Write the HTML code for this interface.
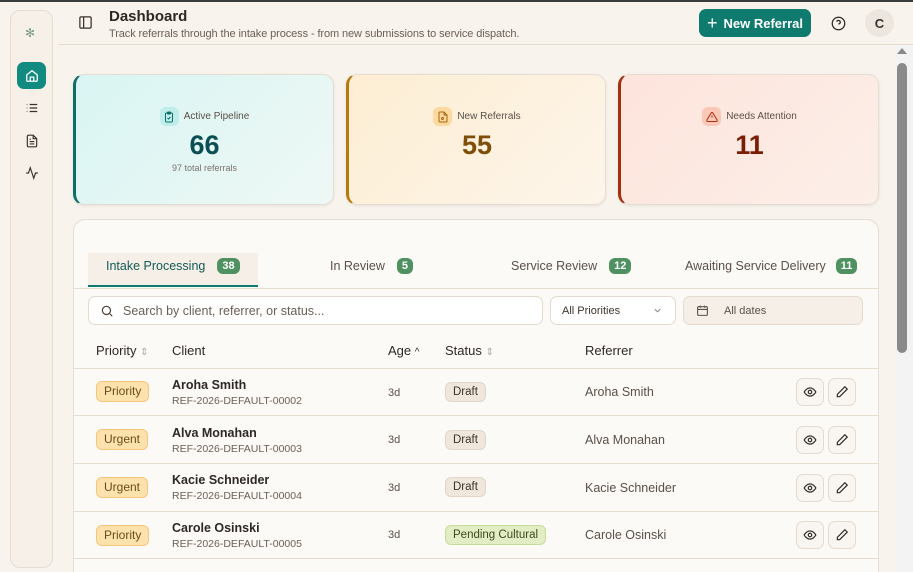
<!DOCTYPE html>
<html style="width:913px;height:572px;overflow:hidden"><head><meta charset="utf-8"><style>
*{box-sizing:border-box;margin:0;padding:0}
body{width:913px;height:572px;overflow:hidden;background:#f8f3ed;font-family:"Liberation Sans",sans-serif;color:#2b2420;position:relative}
.top{position:absolute;left:0;top:0;width:913px;height:2px;background:#3a3a3a}
.side{position:absolute;left:10px;top:10px;width:43px;height:558px;border:1px solid #e6ddd2;border-radius:10px;background:#f7f0e8}
.ico{position:absolute;left:6px;width:29px;height:27px;border-radius:7px;display:flex;align-items:center;justify-content:center}
.hdr-line{position:absolute;left:59px;top:44px;width:854px;height:1px;background:#e4dace}
.title{position:absolute;left:109px;top:8px;font-size:15px;font-weight:bold;color:#2e2824}
.sub{position:absolute;left:109px;top:28px;font-size:11px;color:#6a5f55;letter-spacing:-.1px}
.btn{position:absolute;left:699px;top:9px;width:112px;height:28px;border-radius:7px;background:#0f7a6e;color:#fff;font-size:13px;font-weight:bold;display:flex;align-items:center;justify-content:center;gap:6px}
.av{position:absolute;left:865px;top:9px;width:29px;height:28px;border-radius:50%;background:#ece6de;font-size:13px;display:flex;align-items:center;justify-content:center;font-weight:bold;color:#333}
.sb{position:absolute;left:895px;top:45px;width:18px;height:527px;background:#f3f3f3}
.thumb{position:absolute;left:897px;top:63px;width:10px;height:290px;border-radius:5px;background:#8a8a8a}
.card{position:absolute;top:74px;height:131px;border-radius:11px;border:1px solid #e6ddd2;box-shadow:0 1px 3px rgba(0,0,0,.08);text-align:center}
.card .lab{position:absolute;top:32px;left:0;right:0;display:flex;justify-content:center;align-items:center;gap:5px;font-size:10px;color:#5a5048}
.card .lab i{width:19px;height:19px;border-radius:6px;display:inline-flex;align-items:center;justify-content:center}
.card .num{position:absolute;top:55px;left:0;right:0;font-size:27px;font-weight:bold}
.card .s{position:absolute;top:88px;left:0;right:0;font-size:9px;color:#7a7068}
.panel{position:absolute;left:73px;top:219px;width:806px;height:353px;border-radius:12px 12px 0 0;border:1px solid #e6ddd2;border-bottom:none;background:#fcfaf7}
.tab{position:absolute;top:258px;font-size:12.5px;color:#5a5048;display:flex;align-items:center;gap:12px}
.bdg{background:#4f9160;color:#fff;font-size:11px;font-weight:bold;border-radius:6px;padding:2px 5px}
.in{position:absolute;height:29px;border:1px solid #e4dace;border-radius:7px;background:#fff;font-size:12px;display:flex;align-items:center}
.th{position:absolute;top:343px;font-size:13px;color:#2e2824}
.hl{position:absolute;left:74px;width:804px;height:1px;background:#e6ddd2}
.pr{position:absolute;left:96px;height:21px;border:1px solid #f3c67a;background:#fde2ae;border-radius:6px;font-size:12px;color:#6a4a1a;padding:0 7px;line-height:19px}
.nm{position:absolute;left:172px;font-size:12.5px;font-weight:bold;color:#2e2824}
.rf{position:absolute;left:172px;font-size:10.5px;color:#6a5f55}
.ag{position:absolute;left:388px;font-size:11px;color:#5a5048}
.st{position:absolute;left:445px;height:20px;border:1px solid #e0d6ca;background:#efe6dc;border-radius:6px;font-size:11.5px;padding:0 7px;line-height:18px;color:#3e342c}
.re{position:absolute;left:585px;font-size:12.5px;color:#5a5048}
.ab{position:absolute;width:28px;height:28px;border:1px solid #e4dace;border-radius:7px;background:#f9f5f0;display:flex;align-items:center;justify-content:center}
</style></head><body>
<div class="top"></div>
<div class="side">
 <div style="position:absolute;left:14px;top:15px;font-size:12px;color:#7a9a8a">✻</div>
 <div class="ico" style="top:51px;background:#118a80"><svg width="14" height="14" viewBox="0 0 24 24" fill="none" stroke="#fff" stroke-width="2.2"><path d="M3 10l9-7 9 7v10a1 1 0 0 1-1 1H4a1 1 0 0 1-1-1z"/><path d="M9 21v-7h6v7"/></svg></div>
 <div class="ico" style="top:83px"><svg width="14" height="14" viewBox="0 0 24 24" fill="none" stroke="#3a302a" stroke-width="2"><path d="M8 6h13M8 12h13M8 18h13M3 6h1M3 12h1M3 18h1"/></svg></div>
 <div class="ico" style="top:116px"><svg width="14" height="14" viewBox="0 0 24 24" fill="none" stroke="#3a302a" stroke-width="2"><path d="M14 2H6a2 2 0 0 0-2 2v16a2 2 0 0 0 2 2h12a2 2 0 0 0 2-2V8z"/><path d="M14 2v6h6M8 13h8M8 17h8M8 9h2"/></svg></div>
 <div class="ico" style="top:148px"><svg width="14" height="14" viewBox="0 0 24 24" fill="none" stroke="#3a302a" stroke-width="2"><path d="M22 12h-4l-3 9L9 3l-3 9H2"/></svg></div>
</div>
<svg style="position:absolute;left:78px;top:15px" width="15" height="15" viewBox="0 0 24 24" fill="none" stroke="#3a302a" stroke-width="2"><rect x="3" y="3" width="18" height="18" rx="2"/><path d="M9 3v18"/></svg>
<div class="title">Dashboard</div>
<div class="sub">Track referrals through the intake process - from new submissions to service dispatch.</div>
<div class="hdr-line"></div>
<div class="btn"><span style="font-size:18px;font-weight:normal">+</span>New Referral</div>
<svg style="position:absolute;left:831px;top:16px" width="15" height="15" viewBox="0 0 24 24" fill="none" stroke="#2e2824" stroke-width="2"><circle cx="12" cy="12" r="10"/><path d="M9.1 9a3 3 0 0 1 5.8 1c0 2-3 3-3 3M12 17h.01"/></svg>
<div class="av">C</div>

<div class="card" style="left:73px;width:261px;background:linear-gradient(135deg,#d9f5f3,#eef8f5);border-left:3px solid #0d6e68">
 <div class="lab"><i style="background:#bfeeea"><svg width="12" height="12" viewBox="0 0 24 24" fill="none" stroke="#0d6e68" stroke-width="2"><rect x="5" y="4" width="14" height="18" rx="2"/><rect x="9" y="2" width="6" height="4" rx="1"/><path d="M9 14l2 2 4-4"/></svg></i>Active Pipeline</div>
 <div class="num" style="color:#0b4f55">66</div><div class="s">97 total referrals</div></div>
<div class="card" style="left:346px;width:260px;background:linear-gradient(135deg,#fdeed3,#fdf5ea);border-left:3px solid #b9770e">
 <div class="lab"><i style="background:#fcd9a0"><svg width="12" height="12" viewBox="0 0 24 24" fill="none" stroke="#a8650a" stroke-width="2"><path d="M14 2H6a2 2 0 0 0-2 2v16a2 2 0 0 0 2 2h12a2 2 0 0 0 2-2V8z"/><path d="M14 2v6h6"/><circle cx="11" cy="15" r="2"/></svg></i>New Referrals</div>
 <div class="num" style="color:#7f4f0a">55</div></div>
<div class="card" style="left:618px;width:261px;background:linear-gradient(135deg,#fde4dc,#fcefe8);border-left:3px solid #a3300f">
 <div class="lab"><i style="background:#fbc7b6"><svg width="12" height="12" viewBox="0 0 24 24" fill="none" stroke="#a3300f" stroke-width="2"><path d="M10.3 3.9L1.8 18a2 2 0 0 0 1.7 3h17a2 2 0 0 0 1.7-3L13.7 3.9a2 2 0 0 0-3.4 0z"/><path d="M12 9v4M12 17h.01"/></svg></i>Needs Attention</div>
 <div class="num" style="color:#7a1e06">11</div></div>

<div class="panel"></div>
<div style="position:absolute;left:88px;top:253px;width:170px;height:34px;background:#f5efe7;border-bottom:2px solid #0f7a6e"></div>
<div class="hl" style="top:288px"></div>
<div class="tab" style="left:106px;color:#145a55">Intake Processing <span class="bdg">38</span></div>
<div class="tab" style="left:330px">In Review <span class="bdg">5</span></div>
<div class="tab" style="left:511px">Service Review <span class="bdg">12</span></div>
<div class="tab" style="left:685px;gap:10px">Awaiting Service Delivery <span class="bdg">11</span></div>

<div class="in" style="left:88px;top:296px;width:455px;padding-left:11px;color:#6a5f55;font-size:12.5px"><svg width="14" height="14" viewBox="0 0 24 24" fill="none" stroke="#4a4038" stroke-width="2" style="margin-right:9px"><circle cx="11" cy="11" r="7"/><path d="M21 21l-4.3-4.3"/></svg>Search by client, referrer, or status...</div>
<div class="in" style="left:550px;top:296px;width:126px;padding-left:11px;color:#3e342c;font-size:11px">All Priorities<svg style="position:absolute;right:12px" width="11" height="11" viewBox="0 0 24 24" fill="none" stroke="#8a8078" stroke-width="2"><path d="M6 9l6 6 6-6"/></svg></div>
<div class="in" style="left:683px;top:296px;width:180px;padding-left:12px;background:#f5efe7;color:#5a5048;font-size:11px"><svg width="13" height="13" viewBox="0 0 24 24" fill="none" stroke="#5a5048" stroke-width="2" style="margin-right:15px"><rect x="3" y="5" width="18" height="16" rx="2"/><path d="M3 10h18M8 3v4M16 3v4"/></svg>All dates</div>

<div class="th" style="left:96px">Priority <span style="color:#aaa;font-size:10px">⇕</span></div>
<div class="th" style="left:172px">Client</div>
<div class="th" style="left:388px">Age <span style="font-size:10px">^</span></div>
<div class="th" style="left:445px">Status <span style="color:#aaa;font-size:10px">⇕</span></div>
<div class="th" style="left:585px">Referrer</div>
<div class="hl" style="top:368px"></div>

<div class="pr" style="top:381px">Priority</div><div class="nm" style="top:378px">Aroha Smith</div><div class="rf" style="top:395px">REF-2026-DEFAULT-00002</div><div class="ag" style="top:387px">3d</div><div class="st" style="top:382px">Draft</div><div class="re" style="top:385px">Aroha Smith</div>
<div class="hl" style="top:415px"></div>
<div class="pr" style="top:429px">Urgent</div><div class="nm" style="top:426px">Alva Monahan</div><div class="rf" style="top:443px">REF-2026-DEFAULT-00003</div><div class="ag" style="top:434px">3d</div><div class="st" style="top:430px">Draft</div><div class="re" style="top:433px">Alva Monahan</div>
<div class="hl" style="top:463px"></div>
<div class="pr" style="top:477px">Urgent</div><div class="nm" style="top:473px">Kacie Schneider</div><div class="rf" style="top:490px">REF-2026-DEFAULT-00004</div><div class="ag" style="top:482px">3d</div><div class="st" style="top:477px">Draft</div><div class="re" style="top:481px">Kacie Schneider</div>
<div class="hl" style="top:511px"></div>
<div class="pr" style="top:525px">Priority</div><div class="nm" style="top:521px">Carole Osinski</div><div class="rf" style="top:538px">REF-2026-DEFAULT-00005</div><div class="ag" style="top:529px">3d</div><div class="st" style="top:525px;background:#e3edc5;border-color:#c8dc9a;color:#3e4a1c">Pending Cultural</div><div class="re" style="top:528px">Carole Osinski</div>
<div class="hl" style="top:558px"></div>

<div class="ab" style="left:796px;top:378px"><svg width="14" height="14" viewBox="0 0 24 24" fill="none" stroke="#2e2824" stroke-width="2"><path d="M2 12s4-7 10-7 10 7 10 7-4 7-10 7S2 12 2 12z"/><circle cx="12" cy="12" r="3"/></svg></div>
<div class="ab" style="left:828px;top:378px"><svg width="14" height="14" viewBox="0 0 24 24" fill="none" stroke="#2e2824" stroke-width="2"><path d="M17 3l4 4L8 20H4v-4z"/></svg></div>
<div class="ab" style="left:796px;top:426px"><svg width="14" height="14" viewBox="0 0 24 24" fill="none" stroke="#2e2824" stroke-width="2"><path d="M2 12s4-7 10-7 10 7 10 7-4 7-10 7S2 12 2 12z"/><circle cx="12" cy="12" r="3"/></svg></div>
<div class="ab" style="left:828px;top:426px"><svg width="14" height="14" viewBox="0 0 24 24" fill="none" stroke="#2e2824" stroke-width="2"><path d="M17 3l4 4L8 20H4v-4z"/></svg></div>
<div class="ab" style="left:796px;top:474px"><svg width="14" height="14" viewBox="0 0 24 24" fill="none" stroke="#2e2824" stroke-width="2"><path d="M2 12s4-7 10-7 10 7 10 7-4 7-10 7S2 12 2 12z"/><circle cx="12" cy="12" r="3"/></svg></div>
<div class="ab" style="left:828px;top:474px"><svg width="14" height="14" viewBox="0 0 24 24" fill="none" stroke="#2e2824" stroke-width="2"><path d="M17 3l4 4L8 20H4v-4z"/></svg></div>
<div class="ab" style="left:796px;top:521px"><svg width="14" height="14" viewBox="0 0 24 24" fill="none" stroke="#2e2824" stroke-width="2"><path d="M2 12s4-7 10-7 10 7 10 7-4 7-10 7S2 12 2 12z"/><circle cx="12" cy="12" r="3"/></svg></div>
<div class="ab" style="left:828px;top:521px"><svg width="14" height="14" viewBox="0 0 24 24" fill="none" stroke="#2e2824" stroke-width="2"><path d="M17 3l4 4L8 20H4v-4z"/></svg></div>
<div class="sb"></div><div class="thumb"></div>
<div style="position:absolute;left:897px;top:48px;width:0;height:0;border-left:5px solid transparent;border-right:5px solid transparent;border-bottom:6px solid #8a8a8a"></div>
</body></html>
